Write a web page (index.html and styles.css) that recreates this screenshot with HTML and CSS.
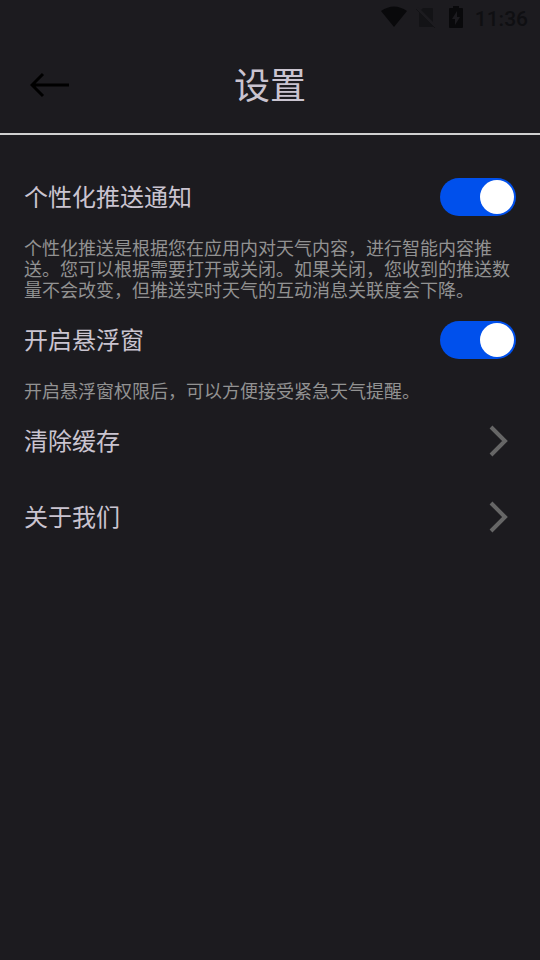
FILE: index.html
```html
<!DOCTYPE html>
<html lang="zh-CN">
<head>
	<meta charset="utf-8">
	<meta name="viewport" content="width=device-width, initial-scale=1">
	<title>设置</title>
	<link rel="stylesheet" href="styles.css">
</head>
<body>
	<div class="status">
		<svg width="26" height="22" viewBox="0 0 26 22">
			<path d="M0 5 Q13 -4 26 5 L13 21 Z" fill="#09090b"/>
		</svg>
		<svg class="sim" width="20" height="22" viewBox="0 0 20 22">
			<path d="M7 2 H16 Q17 2 17 3 V20 Q17 21 16 21 H4 Q3 21 3 20 V6 Z" fill="#131316"/>
			<path d="M1 2 L20 21" stroke="#1c1b1f" stroke-width="3"/>
			<path d="M0 3 L19 22" stroke="#131316" stroke-width="1"/>
		</svg>
		<svg class="battery" width="14" height="22" viewBox="0 0 14 22">
			<path d="M4 0 H10 V2 H13 Q14 2 14 3 V21 Q14 22 13 22 H1 Q0 22 0 21 V3 Q0 2 1 2 H4 Z" fill="#09090b"/>
			<path d="M8 5 L3 13 H6 V19 L11 11 H8 Z" fill="#1c1b1f"/>
		</svg>
		<span class="time">11:36</span>
	</div>

	<header class="header">
		<button type="button" class="back" aria-label="返回">
			<svg width="40" height="26" viewBox="0 0 40 26">
				<path d="M39 13 H3 M13 2 L2 13 L13 24" fill="none" stroke="#000" stroke-width="3"/>
			</svg>
		</button>
		<h1>设置</h1>
	</header>

	<main class="content">
		<!-- 开关 -->
		<div class="row">
			<label for="push">个性化推送通知</label>
			<input type="checkbox" id="push" class="switch" checked>
		</div>
		<p class="desc">个性化推送是根据您在应用内对天气内容，进行智能内容推送。您可以根据需要打开或关闭。如果关闭，您收到的推送数量不会改变，但推送实时天气的互动消息关联度会下降。</p>
		<div class="row">
			<label for="float">开启悬浮窗</label>
			<input type="checkbox" id="float" class="switch" checked>
		</div>
		<p class="desc">开启悬浮窗权限后，可以方便接受紧急天气提醒。</p>

		<!-- 链接 -->
		<a href="#" class="row">
			<span>清除缓存</span>
			<svg width="38" height="38" viewBox="0 0 38 38">
				<path d="M13 5 L27 19 L13 33" fill="none" stroke="#666" stroke-width="4"/>
			</svg>
		</a>
		<a href="#" class="row">
			<span>关于我们</span>
			<svg width="38" height="38" viewBox="0 0 38 38">
				<path d="M13 5 L27 19 L13 33" fill="none" stroke="#666" stroke-width="4"/>
			</svg>
		</a>
	</main>
</body>
</html>
```
FILE: styles.css
```css
* {
	box-sizing: border-box;
}
body {
	margin: 0;
	background-color: #1c1b1f;
	color: #cac4d0;
	font-family: Roboto, "Noto Sans CJK SC", sans-serif;
}
svg {
	display: block;
}

.status {
	display: flex;
	justify-content: flex-end;
	align-items: center;
	height: 34px;
	padding-right: 12px;
}
.sim {
	margin-left: 9px;
}
.battery {
	margin-left: 13px;
}
.time {
	margin-left: 12px;
	padding-top: 4px;
	color: #0f0f12;
	font-size: 21px;
	font-weight: 500;
}

.header {
	display: grid;
	grid-template-columns: 1fr auto 1fr;
	align-items: center;
	height: 101px;
	padding: 2px 24px 0;
	border-bottom: 2px solid #d0d0d0;
}
.header h1 {
	margin: 0;
	padding-top: 4px;
	font-size: 36px;
	line-height: 48px;
	font-weight: 400;
}
.back {
	justify-self: start;
	padding: 6px;
	border: 0;
	background: none;
	cursor: pointer;
}

.content {
	padding: 24px;
}
.row {
	display: flex;
	justify-content: space-between;
	align-items: center;
	height: 76px;
	color: inherit;
	font-size: 24px;
	line-height: 32px;
	text-decoration: none;
}
.row label,
.row span {
	padding-top: 2px;
}
.desc {
	margin: 0;
	padding: 3px 0 1px;
	color: #929292;
	font-size: 18px;
	line-height: 21px;
}

.switch {
	appearance: none;
	width: 76px;
	height: 38px;
	margin: 0;
	padding: 2px;
	border-radius: 19px;
	background-color: #555;
	cursor: pointer;
}
.switch::before {
	content: "";
	display: block;
	width: 34px;
	height: 34px;
	border-radius: 50%;
	background-color: #fff;
}
.switch:checked {
	background-color: #0050ec;
}
.switch:checked::before {
	margin-left: auto;
}
```
